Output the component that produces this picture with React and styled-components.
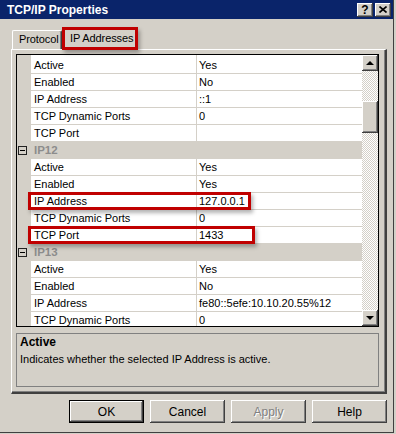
import React from 'react';
import styled, { createGlobalStyle } from 'styled-components';

const FACE = '#d4d0c8';
const SHADOW = '#808080';
const DARK = '#404040';
const LINE = '#d4d0c8';

const GlobalStyle = createGlobalStyle`
  html, body {
    margin: 0;
    padding: 0;
    background: ${FACE};
  }
  body {
    font-family: "Liberation Sans", Arial, sans-serif;
    font-size: 11px;
    color: #000;
  }
`;

const outset = `
  box-shadow: inset -1px -1px ${DARK}, inset 1px 1px #fff,
    inset -2px -2px ${SHADOW}, inset 2px 2px ${FACE};
`;

const Window = styled.div`
  position: relative;
  width: 394px;
  height: 433px;
  box-sizing: border-box;
  background: ${FACE};
  border-right: 1px solid ${DARK};
  border-bottom: 1px solid ${DARK};
  display: flex;
  flex-direction: column;
  overflow: hidden;
`;

const TitleBar = styled.div`
  height: 19px;
  flex: none;
  background: #0a246a;
  color: #fff;
  display: flex;
  align-items: center;
  padding: 0 2px 0 7px;
`;

const Title = styled.div`
  font-weight: bold;
  font-size: 12px;
  flex: 1;
`;

const CaptionButton = styled.div`
  width: 16px;
  height: 14px;
  margin-left: 2px;
  background: ${FACE};
  color: #000;
  display: flex;
  align-items: center;
  justify-content: center;
  font-weight: bold;
  font-size: 12px;
  ${outset}
`;

const TabStrip = styled.div`
  position: relative;
  z-index: 1;
  height: 22px;
  margin-top: 8px;
  padding-left: 12px;
  display: flex;
  align-items: flex-end;
  flex: none;
`;

const Tab = styled.div`
  box-sizing: border-box;
  height: ${({ $active }) => ($active ? 23 : 19)}px;
  margin-bottom: ${({ $active }) => ($active ? -1 : 0)}px;
  width: ${({ $width }) => $width}px;
  padding-left: ${({ $active }) => ($active ? 7 : 6)}px;
  padding-top: ${({ $active }) => ($active ? 4 : 2)}px;
  background: ${FACE};
  border-top: 1px solid #fff;
  border-left: 1px solid #fff;
  border-right: 1px solid ${DARK};
  border-radius: 2px 2px 0 0;
  box-shadow: inset -1px 0 ${SHADOW};
  font-size: 11px;
  letter-spacing: -0.1px;
  white-space: nowrap;
`;

const Panel = styled.div`
  box-sizing: border-box;
  margin-left: 11px;
  width: 376px;
  height: 345px;
  flex: none;
  padding: 4px 6px 5px 4px;
  border-top: 1px solid #fff;
  border-left: 1px solid #fff;
  border-right: 2px solid ${DARK};
  border-bottom: 2px solid ${DARK};
  box-shadow: inset -1px -1px ${SHADOW};
  display: flex;
  flex-direction: column;
`;

const Grid = styled.div`
  height: 273px;
  box-sizing: border-box;
  border: 1px solid #000;
  display: flex;
  flex: none;
`;

const Rows = styled.div`
  flex: 1;
  overflow: hidden;
  padding-top: 2px;
  background: linear-gradient(to right, ${FACE} 14px, #fff 14px, #fff 179px, ${LINE} 179px, ${LINE} 180px, #fff 180px);
`;

const Row = styled.div`
  display: flex;
  height: 17px;
  box-sizing: border-box;
  background: ${({ $category }) => ($category ? FACE : '#fff')};
`;

const Gutter = styled.div`
  width: 14px;
  flex: none;
  background: ${FACE};
  display: flex;
  align-items: center;
  padding-left: 1px;
  box-sizing: border-box;
`;

const NameCell = styled.div`
  width: 166px;
  flex: none;
  box-sizing: border-box;
  padding-left: 3px;
  line-height: 16px;
  border-bottom: 1px solid ${LINE};
  border-right: 1px solid ${LINE};
  white-space: nowrap;
`;

const ValueCell = styled.div`
  flex: 1;
  padding-left: 2px;
  line-height: 16px;
  border-bottom: 1px solid ${LINE};
  white-space: nowrap;
`;

const CategoryLabel = styled.div`
  flex: 1;
  padding-left: 3px;
  line-height: 17px;
  font-weight: bold;
  font-size: 11.5px;
  color: #8c8c8c;
`;

const Collapse = styled.div`
  width: 9px;
  height: 9px;
  box-sizing: border-box;
  border: 1px solid #222;
  display: flex;
  align-items: center;
  justify-content: center;
  &::after {
    content: '';
    width: 5px;
    height: 1px;
    background: #000;
  }
`;

const ScrollBar = styled.div`
  width: 16px;
  flex: none;
  display: flex;
  flex-direction: column;
  background: repeating-conic-gradient(${FACE} 0 25%, #fff 0 50%) 0 0 / 2px 2px;
`;

const ScrollButton = styled.div`
  height: 16px;
  flex: none;
  background: ${FACE};
  display: flex;
  align-items: center;
  justify-content: center;
  ${outset}
`;

const Thumb = styled.div`
  height: 32px;
  margin-top: 30px;
  background: ${FACE};
  ${outset}
`;

const Track = styled.div`
  flex: 1;
`;

const Arrow = styled.div`
  width: 0;
  height: 0;
  border-left: 4px solid transparent;
  border-right: 4px solid transparent;
  ${({ $down }) => ($down ? 'border-top: 4px solid #000;' : 'border-bottom: 4px solid #000;')}
`;

const Description = styled.div`
  margin-top: 6px;
  height: 54px;
  box-sizing: border-box;
  border: 1px solid ${SHADOW};
  padding: 1px 3px;
  line-height: 14px;
`;

const DescTitle = styled.div`
  font-weight: bold;
  font-size: 12px;
`;

const DescText = styled.div`
  margin-top: 3px;
`;

const ButtonRow = styled.div`
  display: flex;
  justify-content: flex-end;
  gap: 6px;
  padding-right: 6px;
  margin-top: 6px;
`;

const Button = styled.div`
  width: 75px;
  height: 23px;
  box-sizing: border-box;
  display: flex;
  align-items: center;
  justify-content: center;
  font-size: 12px;
  background: ${FACE};
  color: ${({ $disabled }) => ($disabled ? SHADOW : '#000')};
  text-shadow: ${({ $disabled }) => ($disabled ? '1px 1px #fff' : 'none')};
  border: ${({ $default }) => ($default ? '1px solid #000' : 'none')};
  ${outset}
`;

const Callout = styled.div`
  position: absolute;
  box-sizing: border-box;
  border: 3px solid #c00000;
  box-shadow: 2px 3px 4px rgba(0, 0, 0, 0.3);
  pointer-events: none;
  z-index: 5;
`;

const properties = [
  { name: 'Active', value: 'Yes' },
  { name: 'Enabled', value: 'No' },
  { name: 'IP Address', value: '::1' },
  { name: 'TCP Dynamic Ports', value: '0' },
  { name: 'TCP Port', value: '' },
  { category: 'IP12' },
  { name: 'Active', value: 'Yes' },
  { name: 'Enabled', value: 'Yes' },
  { name: 'IP Address', value: '127.0.0.1' },
  { name: 'TCP Dynamic Ports', value: '0' },
  { name: 'TCP Port', value: '1433' },
  { category: 'IP13' },
  { name: 'Active', value: 'Yes' },
  { name: 'Enabled', value: 'No' },
  { name: 'IP Address', value: 'fe80::5efe:10.10.20.55%12' },
  { name: 'TCP Dynamic Ports', value: '0' },
];

const CloseGlyph = () => (
  <svg width="8" height="7" viewBox="0 0 8 7">
    <path d="M0.5 0.5 L7.5 6.5 M7.5 0.5 L0.5 6.5" stroke="#000" strokeWidth="1.6" />
  </svg>
);

const App = () => (
  <>
    <GlobalStyle />
    <Window>
      <TitleBar>
        <Title>TCP/IP Properties</Title>
        <CaptionButton>?</CaptionButton>
        <CaptionButton>
          <CloseGlyph />
        </CaptionButton>
      </TitleBar>

      <TabStrip>
        <Tab $width={50}>Protocol</Tab>
        <Tab $active $width={75}>IP Addresses</Tab>
      </TabStrip>

      <Panel>
        <Grid>
          <Rows>
            {properties.map((p, i) =>
              p.category ? (
                <Row key={i} $category>
                  <Gutter>
                    <Collapse />
                  </Gutter>
                  <CategoryLabel>{p.category}</CategoryLabel>
                </Row>
              ) : (
                <Row key={i}>
                  <Gutter />
                  <NameCell>{p.name}</NameCell>
                  <ValueCell>{p.value}</ValueCell>
                </Row>
              )
            )}
          </Rows>
          <ScrollBar>
            <ScrollButton>
              <Arrow />
            </ScrollButton>
            <Thumb />
            <Track />
            <ScrollButton>
              <Arrow $down />
            </ScrollButton>
          </ScrollBar>
        </Grid>
        <Description>
          <DescTitle>Active</DescTitle>
          <DescText>Indicates whether the selected IP Address is active.</DescText>
        </Description>
      </Panel>

      <ButtonRow>
        <Button $default>OK</Button>
        <Button>Cancel</Button>
        <Button $disabled>Apply</Button>
        <Button>Help</Button>
      </ButtonRow>

      <Callout style={{ left: 62, top: 27, width: 76, height: 23 }} />
      <Callout style={{ left: 28, top: 192, width: 223, height: 18 }} />
      <Callout style={{ left: 28, top: 226, width: 227, height: 18 }} />
    </Window>
  </>
);

export default App;
